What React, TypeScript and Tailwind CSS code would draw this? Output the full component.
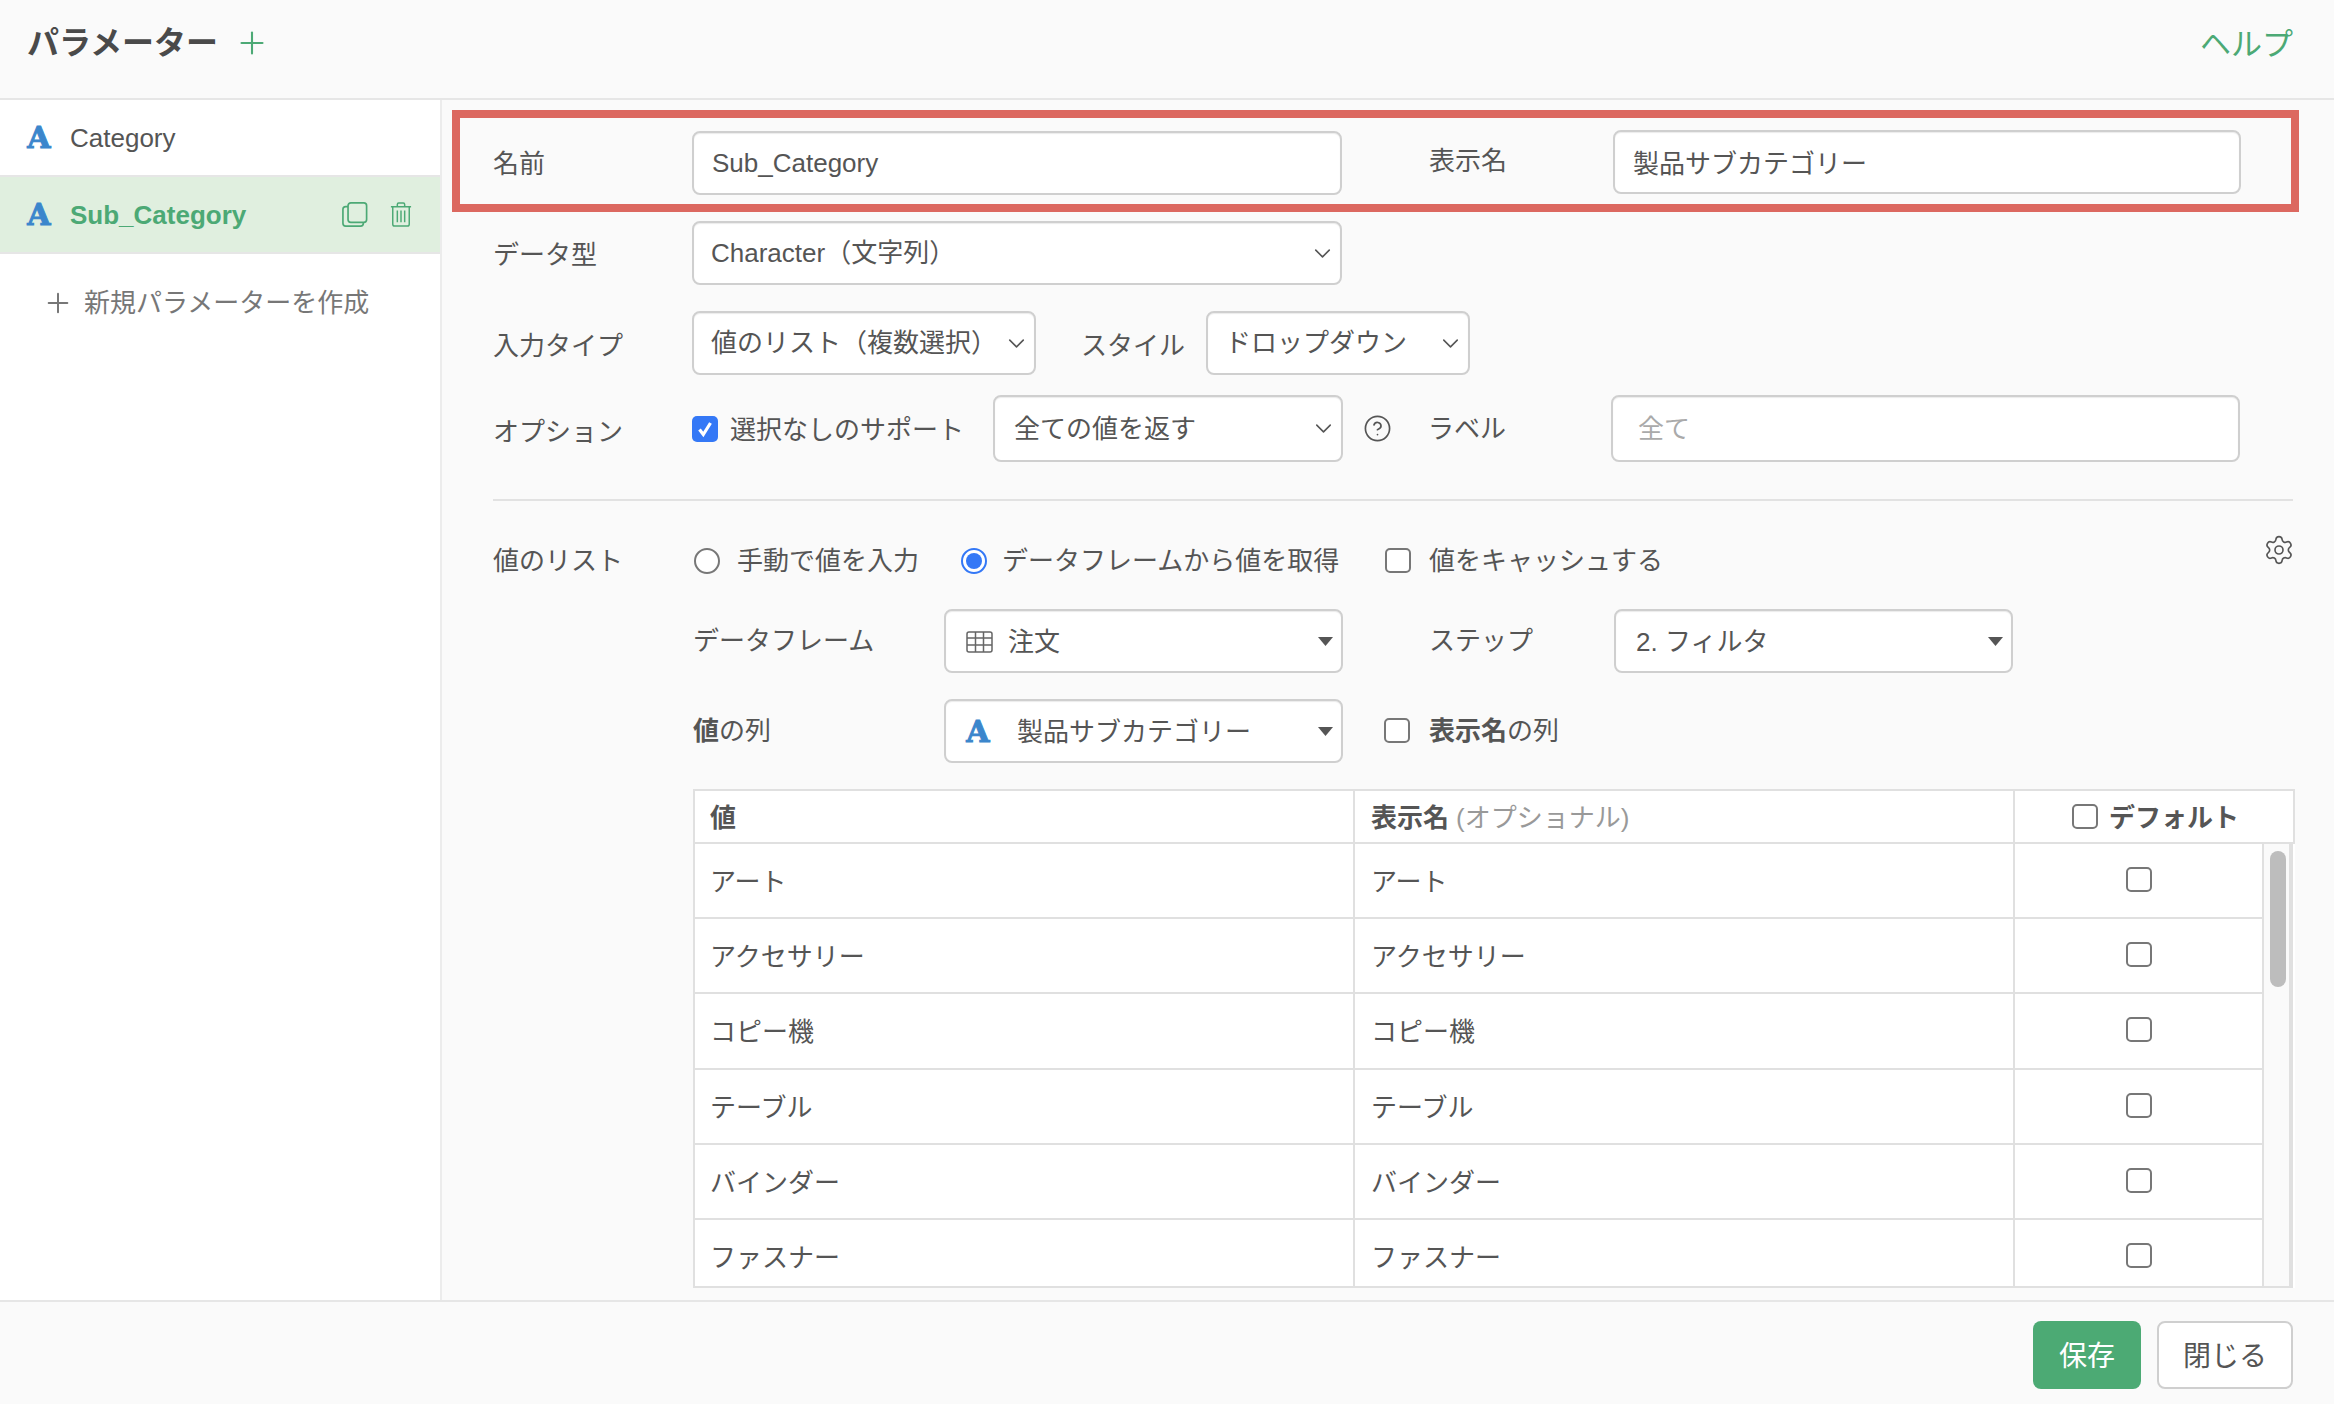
import { ChevronDown, CircleHelp, Plus, Settings } from "lucide-react";

const rows = ["アート", "アクセサリー", "コピー機", "テーブル", "バインダー", "ファスナー"];

function TypeA() {
  return (
    <span className="inline-block w-[24px] flex-none text-center [font-family:'DejaVu_Serif',serif] text-[30px] leading-none font-bold text-[#3b86cc] [-webkit-text-stroke:1px_#3b86cc]">
      A
    </span>
  );
}

function Box({ className = "" }: { className?: string }) {
  return <span className={`block h-[25px] w-[26px] flex-none rounded-[5px] border-2 border-[#777] bg-white ${className}`} />;
}

function Select({ width, height = 64, children }: { width: string; height?: number; children: React.ReactNode }) {
  return (
    <div
      className={`flex flex-none items-center justify-between rounded-lg border-2 border-[#cfcfcf] bg-white pl-[17px] pr-[4px] shadow-[inset_0_1px_1px_rgba(0,0,0,0.08)] ${width}`}
      style={{ height }}
    >
      <span className="whitespace-nowrap">{children}</span>
      <ChevronDown size={27} strokeWidth={1.4} className="flex-none text-[#555]" />
    </div>
  );
}

function CaretSelect({ children }: { children: React.ReactNode }) {
  return (
    <div className="flex h-[64px] w-[399px] flex-none items-center justify-between rounded-lg border-2 border-[#cfcfcf] bg-white pl-[20px] pr-[8px] shadow-[inset_0_1px_1px_rgba(0,0,0,0.08)]">
      <span className="flex items-center whitespace-nowrap pt-[2px]">{children}</span>
      <svg width="15" height="9" viewBox="0 0 15 9" className="flex-none">
        <polygon points="0,0 15,0 7.5,9" fill="#555" />
      </svg>
    </div>
  );
}

function TextInput({ className, value, placeholder }: { className: string; value?: string; placeholder?: string }) {
  return (
    <input
      readOnly
      value={value}
      placeholder={placeholder}
      className={`flex-none rounded-lg border-2 border-[#cfcfcf] bg-white text-[#555] outline-none placeholder:text-[#aaa] shadow-[inset_0_1px_1px_rgba(0,0,0,0.08)] ${className}`}
    />
  );
}

export default function App() {
  return (
    <div className="flex h-[1404px] w-[2334px] flex-col overflow-hidden bg-[#fafafa] [font-family:'Liberation_Sans','Noto_Sans_CJK_JP',sans-serif] text-[26px] leading-[34px] text-[#555]">
      <header className="flex h-[100px] flex-none items-center justify-between border-b-2 border-[#e6e6e6] pb-[12px] pl-[27px] pr-[41px]">
        <div className="flex items-center gap-[16px]">
          <h1 className="text-[32px] leading-[40px] font-bold text-[#4a4a4a]">パラメーター</h1>
          <Plus size={36} strokeWidth={1.4} className="text-[#4ca975]" />
        </div>
        <span className="pt-[4px] text-[31px] leading-[40px] text-[#4ca975]">ヘルプ</span>
      </header>

      <div className="flex min-h-0 flex-1">
        <aside className="w-[442px] flex-none border-r-2 border-[#ececec] bg-white">
          <div className="flex h-[77px] items-center gap-[19px] border-b-2 border-[#e6e6e6] pl-[27px]">
            <TypeA />
            <span>Category</span>
          </div>
          <div className="flex h-[77px] items-center border-b-2 border-[#e6e6e6] bg-[#e0efdf] pl-[27px] pr-[28px]">
            <TypeA />
            <span className="ml-[19px] font-bold text-[#4ca975]">Sub_Category</span>
            <svg width="26" height="27" viewBox="0 0 28 27" fill="none" stroke="#4ca975" strokeWidth="1.8" className="ml-auto">
              <rect x="6.5" y="1" width="20" height="21" rx="3" />
              <path d="M6.5 5H4a3 3 0 0 0-3 3v15a3 3 0 0 0 3 3h16a3 3 0 0 0 3-3v-1" />
            </svg>
            <svg width="22" height="27" viewBox="0 0 24 27" fill="none" stroke="#4ca975" strokeWidth="1.6" className="ml-[22px]">
              <path d="M1 5h22M8 5V2.5A1.5 1.5 0 0 1 9.5 1h5A1.5 1.5 0 0 1 16 2.5V5" />
              <path d="M3 5v19a2 2 0 0 0 2 2h14a2 2 0 0 0 2-2V5" />
              <path d="M8 9v13M12 9v13M16 9v13" />
            </svg>
          </div>
          <div className="mt-[32px] flex items-center gap-[10px] pl-[42px] text-[#777]">
            <Plus size={32} strokeWidth={1.5} />
            <span>新規パラメーターを作成</span>
          </div>
        </aside>

        <main className="min-w-0 flex-1 overflow-hidden pl-[10px] pt-[10px]">
          <div className="flex h-[102px] w-[1847px] items-center border-8 border-[#dc6860] pl-[33px]">
            <label className="w-[199px] flex-none pt-[6px]">名前</label>
            <TextInput className="mt-[4px] h-[64px] w-[650px] px-[18px]" value="Sub_Category" />
            <label className="ml-[87px] w-[184px] flex-none">表示名</label>
            <TextInput className="mt-[2px] h-[64px] w-[628px] px-[18px] pb-[2px]" value="製品サブカテゴリー" />
          </div>

          <div className="pl-[41px]">
            <div className="mt-[9px] flex items-center">
              <label className="w-[199px] flex-none pt-[3px]">データ型</label>
              <Select width="w-[650px]">Character（文字列）</Select>
            </div>

            <div className="mt-[26px] flex items-center">
              <label className="w-[199px] flex-none pt-[6px]">入力タイプ</label>
              <Select width="w-[344px]">値のリスト（複数選択）</Select>
              <label className="ml-[45px] w-[125px] flex-none pt-[6px]">スタイル</label>
              <Select width="w-[264px]">ドロップダウン</Select>
            </div>

            <div className="mt-[20px] flex items-center">
              <label className="w-[199px] flex-none pt-[6px]">オプション</label>
              <span className="flex h-[26px] w-[26px] flex-none items-center justify-center rounded-[5px] bg-[#3478f6]">
                <svg width="18" height="18" viewBox="0 0 18 18" fill="none" stroke="#fff" strokeWidth="3.2">
                  <path d="M3.5 9.5l3.8 5L14.5 3" />
                </svg>
              </span>
              <span className="ml-[12px] w-[263px] flex-none whitespace-nowrap pt-[3px]">選択なしのサポート</span>
              <Select width="w-[350px]" height={67}>
                <span className="ml-[2px]">全ての値を返す</span>
              </Select>
              <CircleHelp size={29} strokeWidth={1.4} className="ml-[20px] flex-none text-[#555]" />
              <label className="ml-[36px] w-[183px] flex-none">ラベル</label>
              <TextInput className="h-[67px] w-[629px] pl-[25px] pr-[18px] pt-[2px]" placeholder="全て" />
            </div>

            <div className="mt-[37px] h-[2px] w-[1800px] bg-[#e2e2e2]" />

            <div className="mt-[33px] flex w-[1800px] items-start">
              <div className="mt-[2px] flex h-[38px] items-end">
                <label className="flex h-[26px] w-[199px] flex-none items-center">値のリスト</label>
                <span className="ml-[2px] h-[26px] w-[26px] flex-none rounded-full border-2 border-[#777] bg-white" />
                <span className="ml-[17px] flex h-[26px] w-[208px] flex-none items-center whitespace-nowrap">手動で値を入力</span>
                <span className="ml-[16px] flex h-[26px] w-[26px] flex-none items-center justify-center rounded-full border-2 border-[#3478f6] bg-white">
                  <span className="h-[16px] w-[16px] rounded-full bg-[#3478f6]" />
                </span>
                <span className="ml-[15px] flex h-[26px] w-[339px] flex-none items-center whitespace-nowrap">データフレームから値を取得</span>
                <Box className="mb-px ml-[44px]" />
                <span className="ml-[18px] flex h-[26px] items-center whitespace-nowrap">値をキャッシュする</span>
              </div>
              <Settings size={32} strokeWidth={1.25} className="-mr-[2px] ml-auto flex-none text-[#555]" />
            </div>

            <div className="mt-[35px] flex items-center pl-[200px]">
              <label className="w-[251px] flex-none">データフレーム</label>
              <CaretSelect>
                <svg width="27" height="22" viewBox="0 0 27 22" fill="none" stroke="#666" strokeWidth="1.5" className="mr-[15px]">
                  <rect x="1" y="1" width="25" height="20" rx="2" />
                  <path d="M1 7h25M1 14h25M9.5 1v20M17.5 1v20" />
                </svg>
                注文
              </CaretSelect>
              <label className="ml-[86px] w-[185px] flex-none">ステップ</label>
              <CaretSelect>2. フィルタ</CaretSelect>
            </div>

            <div className="mt-[26px] flex items-center pl-[200px]">
              <label className="w-[251px] flex-none">
                <b>値</b>の列
              </label>
              <CaretSelect>
                <TypeA />
                <span className="ml-[27px]">製品サブカテゴリー</span>
              </CaretSelect>
              <Box className="ml-[41px] -translate-y-[1px]" />
              <span className="ml-[19px]">
                <b>表示名</b>の列
              </span>
            </div>

            <div className="ml-[200px] mt-[26px] w-[1602px] bg-white">
              <div className="flex h-[55px] items-center border-2 border-[#e0e0e0] font-bold">
                <div className="flex h-full w-[660px] flex-none items-center border-r-2 border-[#e0e0e0] pl-[15px] pt-[2px]">値</div>
                <div className="flex h-full w-[660px] flex-none items-center border-r-2 border-[#e0e0e0] pl-[16px] pt-[2px]">
                  表示名<span className="ml-[7px] font-normal text-[#999]">(オプショナル)</span>
                </div>
                <div className="flex flex-1 items-center pl-[57px] pt-[2px]">
                  <Box className="-translate-y-[1px]" />
                  <span className="ml-[11px]">デフォルト</span>
                </div>
              </div>
              <div className="flex h-[444px] w-[1600px] overflow-hidden border-x-2 border-b-2 border-[#e0e0e0]">
                <div className="h-[452px] w-[1567px] flex-none">
                  {rows.map((r) => (
                    <div key={r} className="flex h-[75.2px] border-b-2 border-[#e0e0e0]">
                      <div className="flex w-[660px] flex-none items-center border-r-2 border-[#e0e0e0] pl-[15px] pt-[3px]">{r}</div>
                      <div className="flex w-[660px] flex-none items-center border-r-2 border-[#e0e0e0] pl-[16px] pt-[3px]">{r}</div>
                      <div className="flex flex-1 items-center justify-center">
                        <Box className="-translate-y-[1px]" />
                      </div>
                    </div>
                  ))}
                </div>
                <div className="flex-1 border-x-2 border-[#e0e0e0] bg-[#fafafa] pl-[6px] pt-[7px]">
                  <div className="h-[136px] w-[16px] rounded-full bg-[#bdbdbd]" />
                </div>
              </div>
            </div>
          </div>
        </main>
      </div>

      <footer className="flex h-[104px] flex-none items-center justify-end gap-[16px] border-t-2 border-[#e6e6e6] pr-[41px] pt-[4px]">
        <button className="h-[68px] w-[108px] rounded-lg bg-[#4caa74] pt-[3px] text-[28px] text-white">保存</button>
        <button className="h-[68px] w-[136px] rounded-lg border-2 border-[#cfcfcf] bg-white pt-[3px] text-[28px] text-[#555]">閉じる</button>
      </footer>
    </div>
  );
}
